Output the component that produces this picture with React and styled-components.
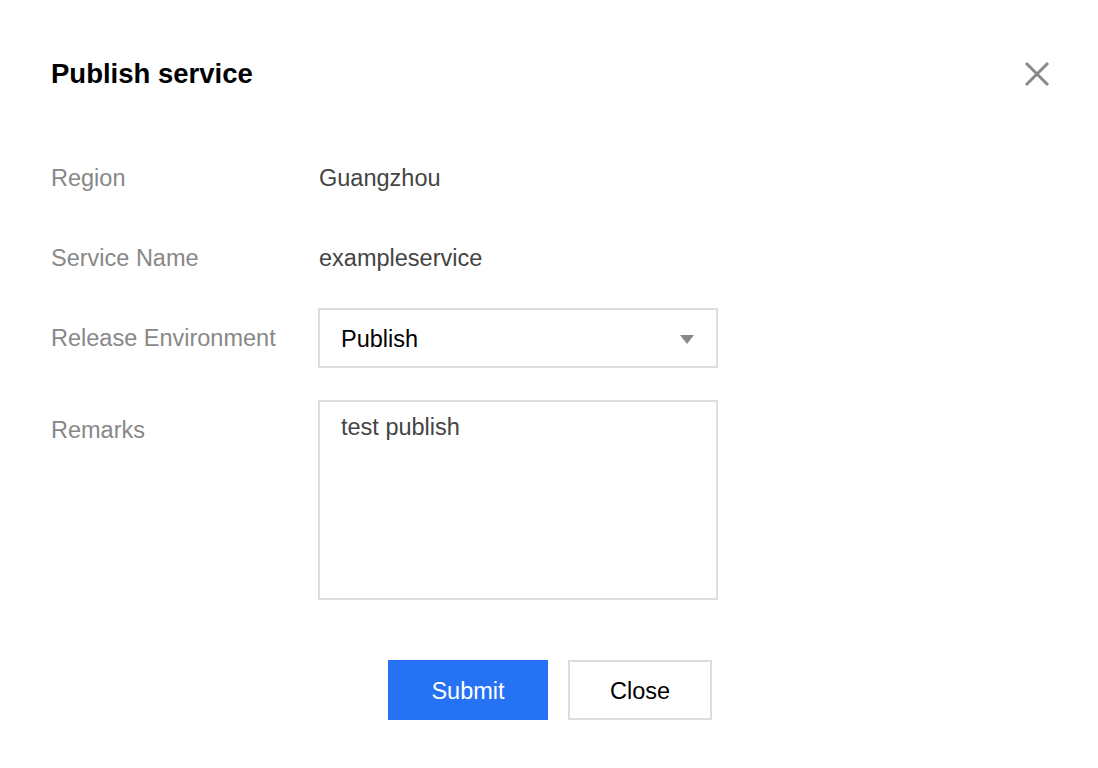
import React from 'react';
import styled, { createGlobalStyle } from 'styled-components';

const GlobalStyle = createGlobalStyle`
  html, body {
    margin: 0;
    padding: 0;
    background: #fff;
  }
  body {
    font-family: "Liberation Sans", Helvetica, Arial, sans-serif;
  }
`;

const Dialog = styled.div`
  width: 1098px;
  height: 768px;
  box-sizing: border-box;
  padding: 50px 48px 0 51px;
  background: #fff;
`;

const Header = styled.div`
  display: flex;
  align-items: center;
  justify-content: space-between;
  height: 48px;
`;

const Title = styled.h2`
  margin: 0;
  font-size: 27.5px;
  font-weight: 700;
  color: #000;
`;

const CloseIcon = styled.button`
  display: flex;
  align-items: center;
  justify-content: center;
  width: 26px;
  height: 26px;
  padding: 0;
  border: none;
  background: none;
  cursor: pointer;
`;

const Form = styled.div`
  display: flex;
  flex-direction: column;
  margin-top: 50px;
`;

const Row = styled.div`
  display: flex;
  align-items: flex-start;
  margin-bottom: ${(props) => props.gap}px;
`;

const Label = styled.div`
  width: 267px;
  flex-shrink: 0;
  line-height: 60px;
  font-size: 23.5px;
  color: #888;
`;

const Value = styled.div`
  padding-left: 1px;
  line-height: 60px;
  font-size: 23.5px;
  color: #444;
`;

const Select = styled.div`
  display: flex;
  align-items: center;
  justify-content: space-between;
  box-sizing: border-box;
  width: 400px;
  height: 60px;
  padding: 2px 22px 0 21px;
  border: 2px solid #ddd;
  font-size: 23.5px;
  color: #000;
`;

const Arrow = styled.span`
  width: 0;
  height: 0;
  border-left: 7px solid transparent;
  border-right: 7px solid transparent;
  border-top: 9px solid #888;
`;

const TextArea = styled.div`
  box-sizing: border-box;
  width: 400px;
  height: 200px;
  padding: 8px 21px;
  border: 2px solid #ddd;
  font-size: 23.5px;
  line-height: 34px;
  color: #444;
`;

const Footer = styled.div`
  display: flex;
  justify-content: center;
  gap: 20px;
  margin-top: 60px;
  margin-right: 1px;
`;

const Button = styled.button`
  box-sizing: border-box;
  height: 60px;
  width: ${(props) => props.width}px;
  padding-top: 3px;
  font-family: inherit;
  font-size: 23.5px;
  border: 2px solid ${(props) => (props.primary ? '#2672f5' : '#ddd')};
  background: ${(props) => (props.primary ? '#2672f5' : '#fff')};
  color: ${(props) => (props.primary ? '#fff' : '#000')};
  cursor: pointer;
`;

export default function App() {
  return (
    <>
      <GlobalStyle />
      <Dialog>
        <Header>
          <Title>Publish service</Title>
          <CloseIcon aria-label="close">
            <svg width="26" height="26" viewBox="0 0 26 26">
              <path d="M2 2 L24 24 M24 2 L2 24" stroke="#888" strokeWidth="3" fill="none" />
            </svg>
          </CloseIcon>
        </Header>
        <Form>
          <Row gap={20}>
            <Label>Region</Label>
            <Value>Guangzhou</Value>
          </Row>
          <Row gap={20}>
            <Label>Service Name</Label>
            <Value>exampleservice</Value>
          </Row>
          <Row gap={32}>
            <Label>Release Environment</Label>
            <Select>
              <span>Publish</span>
              <Arrow />
            </Select>
          </Row>
          <Row gap={0}>
            <Label>Remarks</Label>
            <TextArea>test publish</TextArea>
          </Row>
        </Form>
        <Footer>
          <Button primary width={160}>Submit</Button>
          <Button width={144}>Close</Button>
        </Footer>
      </Dialog>
    </>
  );
}
